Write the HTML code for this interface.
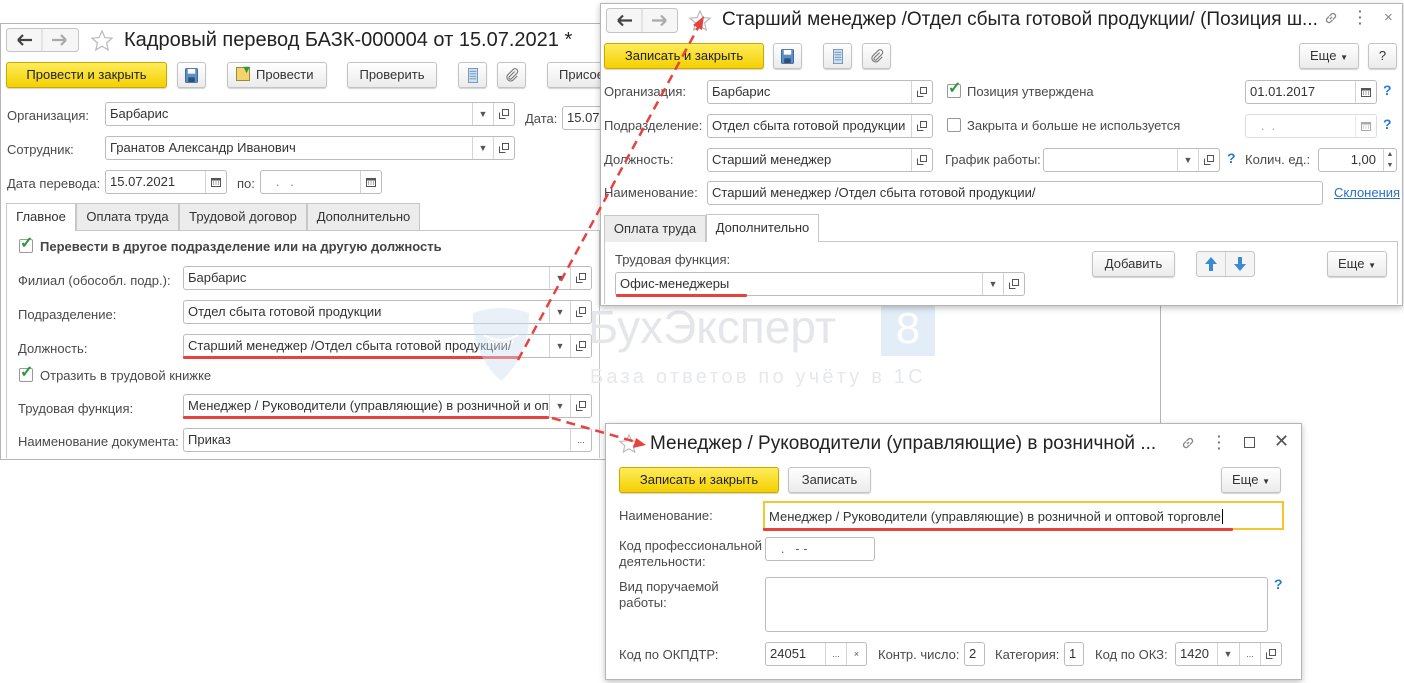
<!DOCTYPE html>
<html><head><meta charset="utf-8">
<style>
*{box-sizing:border-box;margin:0;padding:0}
body{width:1404px;height:683px;background:#fff;position:relative;overflow:hidden;font-family:"Liberation Sans",Arial,sans-serif;font-size:13px;color:#333}
.a{position:absolute}
.win{position:absolute;background:#fff;border:1px solid #b5b5b5}
.sh{box-shadow:0 2px 6px rgba(0,0,0,.25)}
.l{position:absolute;color:#4a4a4a;white-space:nowrap;line-height:16px;margin-top:3px}
.f{position:absolute;border:1px solid #bcbcbc;border-radius:3px;background:#fff;height:24px;line-height:22px;padding-left:4px;white-space:nowrap;overflow:hidden;color:#333}
.d{position:absolute;top:0;bottom:0;border-left:1px solid #d4d4d4;text-align:center;color:#555;font-size:9px;line-height:22px;width:21px}
.btn{position:absolute;border:1px solid #c4c4c4;border-radius:3px;background:linear-gradient(#fff,#ebebeb);box-shadow:0 1px 1px rgba(0,0,0,.18);text-align:center;line-height:24px;height:26px;color:#333;white-space:nowrap}
.y{background:linear-gradient(#ffec5c,#f3d000);border-color:#c9a800;font-weight:normal;color:#222}
.ttl{position:absolute;font-size:20px;color:#222;white-space:nowrap;line-height:24px}
.cb{position:absolute;width:14px;height:14px;border:1px solid #999;border-radius:2px;background:#fff}
.tab{position:absolute;height:27px;border:1px solid #c8c8c8;border-bottom:none;background:#ececec;line-height:26px;text-align:center;color:#333}
.tab.on{background:#fff;height:28px}
.q{position:absolute;color:#2a7bd0;font-size:14px;font-weight:bold}
.ul{position:absolute;height:3px;background:#e8423f;border-radius:1px}
.wm{position:absolute;opacity:.45}
</style></head><body>
<svg width="0" height="0" style="position:absolute"><defs>
<symbol id="cp" viewBox="0 0 10 10"><rect x="3.5" y="0.5" width="6" height="6" fill="#fff" stroke="#555"/><path d="M0.5 3.5v6h6" fill="none" stroke="#555"/></symbol>
<symbol id="cal" viewBox="0 0 10 10"><rect x="0.5" y="1.5" width="9" height="8" fill="#fff" stroke="#555"/><rect x="0.5" y="1.5" width="9" height="2" fill="#555"/><path d="M2 5h1M4.5 5h1M7 5h1M2 7h1M4.5 7h1M7 7h1" stroke="#555"/></symbol>
<symbol id="star" viewBox="0 0 24 24"><path d="M12 2l2.9 6.6 7.1.6-5.4 4.7 1.6 7-6.2-3.7-6.2 3.7 1.6-7L2 9.2l7.1-.6z" fill="#fff" stroke="#b8b8b8" stroke-width="1.2"/></symbol>
<symbol id="nav" viewBox="0 0 72 24"><path d="M12 12h14M12 12l5-5M12 12l5 5" stroke="#444" stroke-width="2.2" fill="none"/><path d="M36 0v24" stroke="#d0d0d0"/><path d="M46 12h14M60 12l-5-5M60 12l-5 5" stroke="#aaa" stroke-width="2.2" fill="none"/></symbol>
<symbol id="sv" viewBox="0 0 14 16"><rect x="0.5" y="0.5" width="13" height="15" rx="1" fill="#5b8fc7" stroke="#3d6a9e"/><rect x="3" y="1" width="8" height="5" fill="#fff"/><rect x="3.5" y="10" width="7" height="5" fill="#2d4f78"/></symbol>
<symbol id="ls" viewBox="0 0 12 18"><rect x="0.5" y="0.5" width="11" height="17" fill="#cfe0f2" stroke="#6b8fb5"/><path d="M2 4h8M2 7h8M2 10h8M2 13h8" stroke="#6b8fb5"/></symbol>
<symbol id="clip" viewBox="0 0 16 16"><path d="M11 4l-6 6a1.6 1.6 0 0 0 2.3 2.3l6.3-6.3a3 3 0 0 0-4.3-4.3L3 8a4.3 4.3 0 0 0 6 6l5-5" fill="none" stroke="#777" stroke-width="1.3"/></symbol>
<symbol id="lnk" viewBox="0 0 16 16"><path d="M7 9l2-2M6 6.5L4 8.5a2.5 2.5 0 0 0 3.5 3.5l2-2M10 9.5l2-2A2.5 2.5 0 0 0 8.5 4l-2 2" fill="none" stroke="#888" stroke-width="1.3"/></symbol>
</defs></svg>

<!-- WINDOW 1 -->
<div class="win" style="left:0;top:23px;width:1161px;height:437px"></div>
<svg class="a" style="left:6px;top:28px" width="73" height="24"><rect x=".5" y=".5" width="72" height="23" rx="3" fill="#f6f6f6" stroke="#c4c4c4"/><use href="#nav" width="72" height="24"/></svg>
<svg class="a" style="left:90px;top:29px" width="24" height="24"><use href="#star"/></svg>
<div class="ttl" style="left:124px;top:28px">Кадровый перевод БАЗК-000004 от 15.07.2021 *</div>
<div class="btn y" style="left:6px;top:62px;width:161px">Провести и закрыть</div>
<div class="btn" style="left:177px;top:62px;width:29px"><svg width="13" height="15" style="margin-top:5px"><use href="#sv"/></svg></div>
<div class="btn" style="left:227px;top:62px;width:100px;text-align:left;padding-left:8px"><span style="display:inline-block;width:14px;height:14px;background:#f2d46b;border:1px solid #9a8a40;vertical-align:-2px;margin-right:6px;position:relative"><span style="position:absolute;right:-3px;top:-3px;color:#2a9a3a;font-size:11px;line-height:10px">▼</span></span>Провести</div>
<div class="btn" style="left:347px;top:62px;width:90px">Проверить</div>
<div class="btn" style="left:458px;top:62px;width:29px"><svg width="10" height="15" style="margin-top:5px"><use href="#ls"/></svg></div>
<div class="btn" style="left:497px;top:62px;width:29px"><svg width="14" height="14" style="margin-top:5px"><use href="#clip"/></svg></div>
<div class="btn" style="left:547px;top:62px;width:70px;text-align:left;padding-left:11px">Присое</div>

<div class="l" style="left:7px;top:105px">Организация:</div>
<div class="f" style="left:105px;top:102px;width:410px">Барбарис<span class="d" style="right:21px">▼</span><span class="d" style="right:0"><svg width="10" height="10" style="margin-top:6px"><use href="#cp"/></svg></span></div>
<div class="l" style="left:525px;top:108px">Дата:</div>
<div class="f" style="left:562px;top:106px;width:60px">15.07.</div>
<div class="l" style="left:7px;top:139px">Сотрудник:</div>
<div class="f" style="left:105px;top:136px;width:410px">Гранатов Александр Иванович<span class="d" style="right:21px">▼</span><span class="d" style="right:0"><svg width="10" height="10" style="margin-top:6px"><use href="#cp"/></svg></span></div>
<div class="l" style="left:7px;top:173px">Дата перевода:</div>
<div class="f" style="left:105px;top:170px;width:122px">15.07.2021<span class="d" style="right:0"><svg width="10" height="10" style="margin-top:6px"><use href="#cal"/></svg></span></div>
<div class="l" style="left:237px;top:173px">по:</div>
<div class="f" style="left:260px;top:170px;width:122px;color:#888">&nbsp;&nbsp;&nbsp;.&nbsp;&nbsp;&nbsp;.<span class="d" style="right:0"><svg width="10" height="10" style="margin-top:6px"><use href="#cal"/></svg></span></div>

<div class="a" style="left:6px;top:230px;width:594px;height:228px;border:1px solid #c8c8c8;border-bottom:none"></div>
<div class="tab" style="left:76px;top:203px;width:103px">Оплата труда</div>
<div class="tab" style="left:179px;top:203px;width:128px">Трудовой договор</div>
<div class="tab" style="left:307px;top:203px;width:113px">Дополнительно</div>
<div class="tab on" style="left:6px;top:203px;width:70px">Главное</div>

<div class="cb" style="left:19px;top:239px"></div><div class="a" style="left:20px;top:233px;color:#2a9a3a;font-size:16px;font-weight:bold">✓</div>
<div class="l" style="left:40px;top:236px;font-weight:bold;color:#444">Перевести в другое подразделение или на другую должность</div>
<div class="l" style="left:18px;top:270px">Филиал (обособл. подр.):</div>
<div class="f" style="left:183px;top:266px;width:409px">Барбарис<span class="d" style="right:21px">▼</span><span class="d" style="right:0"><svg width="10" height="10" style="margin-top:6px"><use href="#cp"/></svg></span></div>
<div class="l" style="left:18px;top:304px">Подразделение:</div>
<div class="f" style="left:183px;top:300px;width:409px">Отдел сбыта готовой продукции<span class="d" style="right:21px">▼</span><span class="d" style="right:0"><svg width="10" height="10" style="margin-top:6px"><use href="#cp"/></svg></span></div>
<div class="l" style="left:18px;top:338px">Должность:</div>
<div class="f" style="left:183px;top:334px;width:409px">Старший менеджер /Отдел сбыта готовой продукции/<span class="d" style="right:21px">▼</span><span class="d" style="right:0"><svg width="10" height="10" style="margin-top:6px"><use href="#cp"/></svg></span></div>
<div class="ul" style="left:183px;top:356px;width:337px"></div>
<div class="cb" style="left:19px;top:368px"></div><div class="a" style="left:20px;top:362px;color:#2a9a3a;font-size:16px;font-weight:bold">✓</div>
<div class="l" style="left:40px;top:365px">Отразить в трудовой книжке</div>
<div class="l" style="left:18px;top:398px">Трудовая функция:</div>
<div class="f" style="left:183px;top:394px;width:409px;padding-right:44px">Менеджер / Руководители (управляющие) в розничной и оп<span class="d" style="right:21px">▼</span><span class="d" style="right:0"><svg width="10" height="10" style="margin-top:6px"><use href="#cp"/></svg></span></div>
<div class="ul" style="left:183px;top:416px;width:366px"></div>
<div class="l" style="left:18px;top:431px">Наименование документа:</div>
<div class="f" style="left:183px;top:428px;width:409px">Приказ<span class="d" style="right:0">...</span></div>

<!-- watermark -->
<svg class="wm" style="left:470px;top:305px" width="62" height="78"><path d="M3 8 Q31 -2 59 8 Q60 50 31 76 Q2 50 3 8z" fill="#cfe0f0"/><path d="M14 30q17 10 34 0M18 36q13 8 26 0" stroke="#fff" stroke-width="2" fill="none"/></svg>
<div class="a" style="left:588px;top:300px;font-size:46px;color:#e4e6ec;line-height:54px">БухЭксперт</div>
<div class="a" style="left:881px;top:302px;width:54px;height:54px;background:#e2edf7;color:#fff;font-size:44px;text-align:center;line-height:54px">8</div>
<div class="a" style="left:590px;top:364px;font-size:20px;color:#e6e8ed;letter-spacing:3.2px;line-height:26px">База ответов по учёту в 1С</div>

<!-- WINDOW 2 -->
<div class="win sh" style="left:600px;top:3px;width:803px;height:303px"></div>
<svg class="a" style="left:606px;top:8px" width="72" height="25"><rect x=".5" y=".5" width="71" height="24" rx="3" fill="#f6f6f6" stroke="#c4c4c4"/><use href="#nav" width="72" height="25"/></svg>
<svg class="a" style="left:688px;top:9px" width="24" height="24"><use href="#star"/></svg>
<div class="ttl" style="left:722px;top:8px;font-size:19px">Старший менеджер /Отдел сбыта готовой продукции/ (Позиция ш...</div>
<svg class="a" style="left:1323px;top:10px" width="16" height="16"><use href="#lnk"/></svg>
<div class="a" style="left:1358px;top:8px;color:#777;font-size:14px;line-height:6px;font-weight:bold">·<br>·<br>·</div>
<div class="a" style="left:1384px;top:9px;color:#888;font-size:15px">×</div>
<div class="btn y" style="left:604px;top:43px;width:160px">Записать и закрыть</div>
<div class="btn" style="left:773px;top:43px;width:29px"><svg width="13" height="15" style="margin-top:5px"><use href="#sv"/></svg></div>
<div class="btn" style="left:823px;top:43px;width:29px"><svg width="10" height="15" style="margin-top:5px"><use href="#ls"/></svg></div>
<div class="btn" style="left:862px;top:43px;width:29px"><svg width="14" height="14" style="margin-top:5px"><use href="#clip"/></svg></div>
<div class="btn" style="left:1299px;top:43px;width:60px">Еще <span style="font-size:8px">▼</span></div>
<div class="btn" style="left:1368px;top:43px;width:29px">?</div>

<div class="l" style="left:604px;top:81px">Организация:</div>
<div class="f" style="left:707px;top:80px;width:226px">Барбарис<span class="d" style="right:0"><svg width="10" height="10" style="margin-top:6px"><use href="#cp"/></svg></span></div>
<div class="cb" style="left:947px;top:84px"></div><div class="a" style="left:948px;top:78px;color:#2a9a3a;font-size:16px;font-weight:bold">✓</div>
<div class="l" style="left:967px;top:81px">Позиция утверждена</div>
<div class="f" style="left:1245px;top:80px;width:132px">01.01.2017<span class="d" style="right:0"><svg width="10" height="10" style="margin-top:6px"><use href="#cal"/></svg></span></div>
<div class="q" style="left:1383px;top:82px">?</div>
<div class="l" style="left:604px;top:115px">Подразделение:</div>
<div class="f" style="left:707px;top:114px;width:226px">Отдел сбыта готовой продукции<span class="d" style="right:0"><svg width="10" height="10" style="margin-top:6px"><use href="#cp"/></svg></span></div>
<div class="cb" style="left:947px;top:118px"></div>
<div class="l" style="left:967px;top:115px">Закрыта и больше не используется</div>
<div class="f" style="left:1245px;top:114px;width:132px;color:#aaa;border-color:#ddd">&nbsp;&nbsp;&nbsp;.&nbsp;&nbsp;.<span class="d" style="right:0;opacity:.5"><svg width="10" height="10" style="margin-top:6px"><use href="#cal"/></svg></span></div>
<div class="q" style="left:1383px;top:116px">?</div>
<div class="l" style="left:604px;top:149px">Должность:</div>
<div class="f" style="left:707px;top:148px;width:226px">Старший менеджер<span class="d" style="right:0"><svg width="10" height="10" style="margin-top:6px"><use href="#cp"/></svg></span></div>
<div class="l" style="left:945px;top:149px">График работы:</div>
<div class="f" style="left:1043px;top:148px;width:177px"><span class="d" style="right:21px">▼</span><span class="d" style="right:0"><svg width="10" height="10" style="margin-top:6px"><use href="#cp"/></svg></span></div>
<div class="q" style="left:1227px;top:150px">?</div>
<div class="l" style="left:1245px;top:149px">Колич. ед.:</div>
<div class="f" style="left:1318px;top:148px;width:79px;text-align:right;padding-right:20px">1,00<span class="d" style="right:0;width:13px;font-size:7px;line-height:11px">▲<br>▼</span></div>
<div class="l" style="left:604px;top:182px">Наименование:</div>
<div class="f" style="left:707px;top:181px;width:616px">Старший менеджер /Отдел сбыта готовой продукции/</div>
<div class="a" style="left:1334px;top:185px;color:#2a6fc0;text-decoration:underline">Склонения</div>
<div class="a" style="left:604px;top:241px;width:794px;height:63px;border:1px solid #c8c8c8;border-bottom:none"></div>
<div class="tab" style="left:604px;top:215px;width:102px">Оплата труда</div>
<div class="tab on" style="left:706px;top:214px;width:113px">Дополнительно</div>
<div class="l" style="left:615px;top:249px">Трудовая функция:</div>
<div class="f" style="left:615px;top:272px;width:410px">Офис-менеджеры<span class="d" style="right:21px">▼</span><span class="d" style="right:0"><svg width="10" height="10" style="margin-top:6px"><use href="#cp"/></svg></span></div>
<div class="ul" style="left:616px;top:294px;width:131px"></div>
<div class="btn" style="left:1092px;top:251px;width:83px">Добавить</div>
<svg class="a" style="left:1196px;top:251px" width="59" height="26"><rect x=".5" y=".5" width="58" height="25" rx="3" fill="#f4f4f4" stroke="#c4c4c4"/><path d="M29.5 1v24" stroke="#d0d0d0"/><path d="M15 6l-6 7h4v7h4v-7h4z" fill="#3a8ad6"/><path d="M44 20l-6-7h4V6h4v7h4z" fill="#3a8ad6"/></svg>
<div class="btn" style="left:1327px;top:251px;width:60px">Еще <span style="font-size:8px">▼</span></div>

<!-- WINDOW 3 -->
<div class="win sh" style="left:605px;top:423px;width:697px;height:257px"></div>
<svg class="a" style="left:618px;top:433px" width="22" height="22"><use href="#star"/></svg>
<div class="ttl" style="left:650px;top:432px;font-size:19px">Менеджер / Руководители (управляющие) в розничной ...</div>
<svg class="a" style="left:1180px;top:435px" width="16" height="16"><use href="#lnk"/></svg>
<div class="a" style="left:1217px;top:433px;color:#777;font-size:14px;line-height:6px;font-weight:bold">·<br>·<br>·</div>
<div class="a" style="left:1244px;top:437px;width:11px;height:11px;border:1.5px solid #555"></div>
<div class="a" style="left:1274px;top:431px;color:#555;font-size:18px">✕</div>
<div class="btn y" style="left:619px;top:467px;width:160px">Записать и закрыть</div>
<div class="btn" style="left:788px;top:467px;width:83px">Записать</div>
<div class="btn" style="left:1221px;top:467px;width:60px">Еще <span style="font-size:8px">▼</span></div>
<div class="l" style="left:619px;top:505px">Наименование:</div>
<div class="f" style="left:763px;top:501px;width:521px;height:29px;line-height:27px;border:2px solid #f5c530;border-radius:0">Менеджер / Руководители (управляющие) в розничной и оптовой торговле<span style="border-left:1px solid #000;margin-left:1px"></span></div>
<div class="ul" style="left:763px;top:528px;width:470px"></div>
<div class="l" style="left:619px;top:535px">Код профессиональной<br>деятельности:</div>
<div class="f" style="left:765px;top:537px;width:110px;color:#666">&nbsp;&nbsp;&nbsp;.&nbsp;&nbsp;&nbsp;- -</div>
<div class="l" style="left:619px;top:576px">Вид поручаемой<br>работы:</div>
<div class="f" style="left:765px;top:577px;width:503px;height:55px"></div>
<div class="q" style="left:1274px;top:576px">?</div>
<div class="l" style="left:619px;top:644px">Код по ОКПДТР:</div>
<div class="f" style="left:765px;top:642px;width:102px">24051<span class="d" style="right:20px">...</span><span class="d" style="right:0;width:20px">×</span></div>
<div class="l" style="left:878px;top:644px">Контр. число:</div>
<div class="f" style="left:964px;top:642px;width:21px">2</div>
<div class="l" style="left:995px;top:644px">Категория:</div>
<div class="f" style="left:1064px;top:642px;width:20px">1</div>
<div class="l" style="left:1095px;top:644px">Код по ОКЗ:</div>
<div class="f" style="left:1175px;top:642px;width:107px">1420<span class="d" style="right:43px">▼</span><span class="d" style="right:21px">...</span><span class="d" style="right:0"><svg width="10" height="10" style="margin-top:6px"><use href="#cp"/></svg></span></div>

<!-- arrows -->
<svg class="a" style="left:0;top:0" width="1404" height="683">
<path d="M518 360 L700 24" stroke="#e8423f" stroke-width="2.5" stroke-dasharray="9 6" fill="none"/>
<path d="M704 16 l-2 14 l-9 -5z" fill="#e8423f"/>
<path d="M552 418 L636 442" stroke="#e8423f" stroke-width="2.5" stroke-dasharray="9 6" fill="none"/>
<path d="M646 445 l-13 3 l3 -10z" fill="#e8423f"/>
</svg>
</body></html>
